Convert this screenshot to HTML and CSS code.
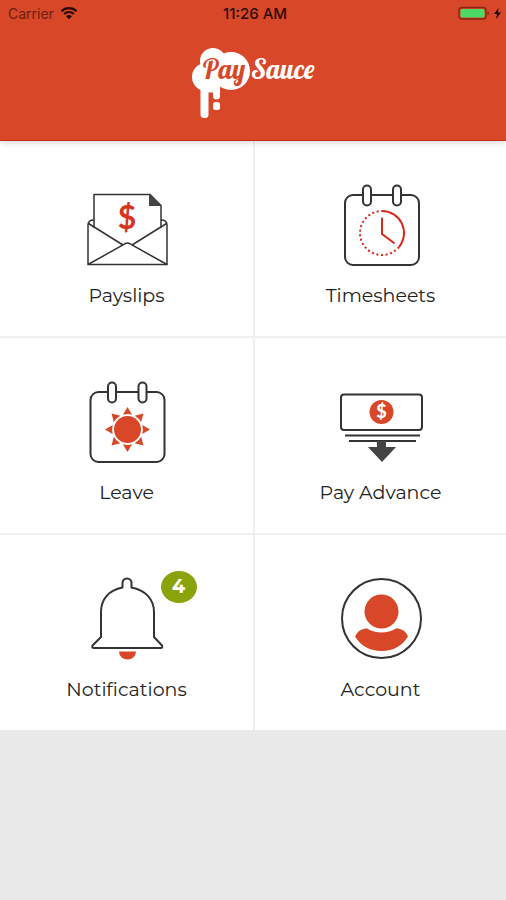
FILE: index.html
```html
<!DOCTYPE html>
<html lang="en">
<head>
    <meta charset="UTF-8">
    <meta name="viewport" content="width=device-width, initial-scale=1.0">
    <title>PaySauce</title>
    <link rel="stylesheet" href="styles.css">
</head>
<body>
    <header class="header">
        <div class="status-bar">
            <div class="status-left">
                <span class="carrier">Carrier</span>
                <svg class="wifi" viewBox="0 0 18 14">
                    <path d="M1.5 5.2a10.6 10.6 0 0 1 15 0M4.2 8a6.8 6.8 0 0 1 9.6 0" fill="none" stroke="#2a0a04" stroke-width="2.2"/>
                    <path d="M9 13.2 6 10.2a4.2 4.2 0 0 1 6 0z" fill="#2a0a04"/>
                </svg>
            </div>
            <span class="time">11:26 AM</span>
            <svg class="battery" viewBox="0 0 44 14">
                <rect x="1" y="1.5" width="27" height="11.5" rx="3" fill="none" stroke="#8c2412" stroke-width="1.4"/>
                <rect x="2.5" y="3" width="24" height="8.5" rx="1.5" fill="#4cd964"/>
                <path d="M29.5 5.2c2 .8 2 3.4 0 4.2z" fill="#8c2412"/>
                <path d="M40.5 2 36 8h3l-1 5 5-6.5h-3z" fill="#1a0602"/>
            </svg>
        </div>
        <div class="brand">
            <svg class="logo" viewBox="0 0 126 74" role="img" aria-label="PaySauce">
                <g fill="#fff">
                    <circle cx="23" cy="15" r="13"/>
                    <circle cx="16" cy="31" r="14"/>
                    <circle cx="41" cy="25" r="19"/>
                    <rect x="10.5" y="34" width="8" height="38" rx="3.5"/>
                    <path d="M15 38h15v12a3.5 3.5 0 0 1-7 0v-3.500h-6z"/>
                    <rect x="23" y="56" width="7" height="8" rx="2.5"/>
                </g>
                <text class="logo-text" x="13" y="33" fill="#d84727">Pay</text>
                <text class="logo-text" x="61" y="33" fill="#fff">Sauce</text>
            </svg>
        </div>
    </header>

    <main class="menu">
        <a class="tile" href="#payslips">
            <span class="icon">
                <svg viewBox="0 0 84 84">
                    <g fill="none" stroke="#333" stroke-width="1.5">
                        <path d="M9 45V11.5h56l11 11V45"/>
                        <path d="M9 37c-4 0-6 2-6 5v39.5h79V42c0-3-2-5-6-5"/>
                        <path d="M3.5 40.5 38 62M81.5 40.5 47 62M3 81.5 38 62q4.5-4 9 0l35 19.5"/>
                    </g>
                    <path d="M64 11v12h12.5z" fill="#444"/>
                    <text class="dollar" x="42" y="46">$</text>
                </svg>
            </span>
            <span class="label">Payslips</span>
        </a>

        <a class="tile" href="#timesheets">
            <span class="icon">
                <svg viewBox="0 0 84 84">
                    <g fill="#fff" stroke="#333" stroke-width="2">
                        <rect x="6" y="12" width="74" height="70" rx="8"/>
                        <rect x="24" y="2.5" width="8" height="20" rx="4"/>
                        <rect x="54" y="2.5" width="8" height="20" rx="4"/>
                    </g>
                    <g fill="none" stroke="#d8291c" stroke-width="2">
                        <path d="M43 28a22 22 0 0 1 17 36"/>
                        <path d="M60 64A22 22 0 1 1 43 28" stroke-dasharray="2 2.6"/>
                        <path d="M43 35.5V51l12 9" stroke-linecap="round"/>
                    </g>
                </svg>
            </span>
            <span class="label">Timesheets</span>
        </a>

        <a class="tile" href="#leave">
            <span class="icon">
                <svg viewBox="0 0 84 84">
                    <g fill="#fff" stroke="#333" stroke-width="2">
                        <rect x="5.5" y="12" width="74" height="70" rx="8"/>
                        <rect x="23" y="2.5" width="8" height="20" rx="4"/>
                        <rect x="53.5" y="2.5" width="8" height="20" rx="4"/>
                    </g>
                    <g fill="#d84727" transform="translate(42.5 49.5)">
                        <circle r="13.5"/>
                        <path id="ray" d="M0-22.5-4.6-14.8Q0-16 4.6-14.8z"/>
                        <use href="#ray" transform="rotate(45)"/>
                        <use href="#ray" transform="rotate(90)"/>
                        <use href="#ray" transform="rotate(135)"/>
                        <use href="#ray" transform="rotate(180)"/>
                        <use href="#ray" transform="rotate(225)"/>
                        <use href="#ray" transform="rotate(270)"/>
                        <use href="#ray" transform="rotate(315)"/>
                    </g>
                </svg>
            </span>
            <span class="label">Leave</span>
        </a>

        <a class="tile" href="#pay-advance">
            <span class="icon">
                <svg viewBox="0 0 84 84">
                    <rect x="2" y="14.5" width="81" height="35.5" rx="3" fill="none" stroke="#333" stroke-width="2"/>
                    <circle cx="42.5" cy="32" r="12" fill="#d84727"/>
                    <text class="dollar-small" x="42.5" y="38">$</text>
                    <path d="M6 55.5h75M10 61h67" stroke="#333" stroke-width="2"/>
                    <path d="M38 61h9v6h10L43 82 29 67h9z" fill="#444"/>
                </svg>
            </span>
            <span class="label">Pay Advance</span>
        </a>

        <a class="tile" href="#notifications">
            <span class="icon">
                <svg viewBox="0 0 84 84">
                    <path d="M37.5 10.5V6a4.5 4.5 0 0 1 9 0v4.5C60 13 69 22 69 35v25l8 8.5q1 2.5-1.500 2.500H9q-2.500 0-1.500-2.500L16 60V35C16 22 24 13 37.5 10.500z" fill="none" stroke="#333" stroke-width="2" stroke-linejoin="round"/>
                    <path d="M34 74.5h17a8.5 8 0 0 1-17 0z" fill="#d84727"/>
                </svg>
                <span class="badge">4</span>
            </span>
            <span class="label">Notifications</span>
        </a>

        <a class="tile" href="#account">
            <span class="icon">
                <svg viewBox="0 0 84 84">
                    <circle cx="42.5" cy="41.5" r="39.5" fill="none" stroke="#333" stroke-width="2"/>
                    <g fill="#d84727">
                        <circle cx="42.5" cy="34.5" r="17"/>
                        <path d="M27.5 51.2q15 8.800 30 0 9 1 11.500 8.300-9 14.500-26.500 14.500T16 59.500q3-7.300 11.500-8.300z"/>
                    </g>
                </svg>
            </span>
            <span class="label">Account</span>
        </a>
    </main>
</body>
</html>
```
FILE: styles.css
```css
* {
    margin: 0;
    padding: 0;
    box-sizing: border-box;
}

body {
    font-family: Montserrat, Inter, sans-serif;
    background: #e9e9e9;
    min-height: 100vh;
    color: #222;
}

.header {
    position: relative;
    background: #d84727;
    border-bottom: 1px solid #c92a12;
    box-shadow: 0 2px 6px rgba(0, 0, 0, 0.15);
}

.status-bar {
    display: grid;
    grid-template-columns: 1fr auto 1fr;
    align-items: center;
    height: 26px;
    padding: 0 4px 0 8px;
    font-family: Inter, sans-serif;
    font-size: 14px;
}

.status-left {
    display: flex;
    align-items: center;
    gap: 6px;
}

.carrier {
    color: #6e1d0e;
}

.wifi {
    width: 18px;
    height: 14px;
}

.time {
    color: #2a0a04;
    font-size: 15px;
    font-weight: 500;
}

.battery {
    width: 44px;
    height: 14px;
    justify-self: end;
}

.brand {
    display: flex;
    justify-content: center;
    padding: 20px 0;
}

.logo {
    width: 126px;
    height: 74px;
}

.logo-text {
    font-family: Lobster, "Liberation Serif", serif;
    font-size: 27px;
}

.menu {
    display: grid;
    grid-template-columns: 1fr 1fr;
    background: #fff;
}

.tile {
    display: flex;
    flex-direction: column;
    align-items: center;
    gap: 17px;
    padding: 42px 0 28px;
    border-bottom: 2px solid #efefef;
    color: inherit;
    text-decoration: none;
}

.tile:nth-child(even) {
    border-left: 2px solid #efefef;
}

.tile:nth-last-child(-n+2) {
    border-bottom: none;
}

.icon {
    position: relative;
    width: 84px;
    height: 84px;
}

.icon svg {
    display: block;
    width: 100%;
    height: 100%;
}

.dollar {
    font-family: Lato, sans-serif;
    font-size: 32px;
    font-weight: 700;
    fill: #d8351f;
    text-anchor: middle;
}

.dollar-small {
    font-family: Lato, sans-serif;
    font-size: 18px;
    font-weight: 900;
    fill: #fff;
    text-anchor: middle;
}

.badge {
    position: absolute;
    top: -6px;
    left: 76px;
    width: 36px;
    height: 32px;
    border-radius: 50%;
    background: #8aa30a;
    color: #fff;
    font-size: 19px;
    font-weight: 700;
    line-height: 32px;
    text-align: center;
}

.label {
    font-size: 19px;
    line-height: 24px;
}
```
